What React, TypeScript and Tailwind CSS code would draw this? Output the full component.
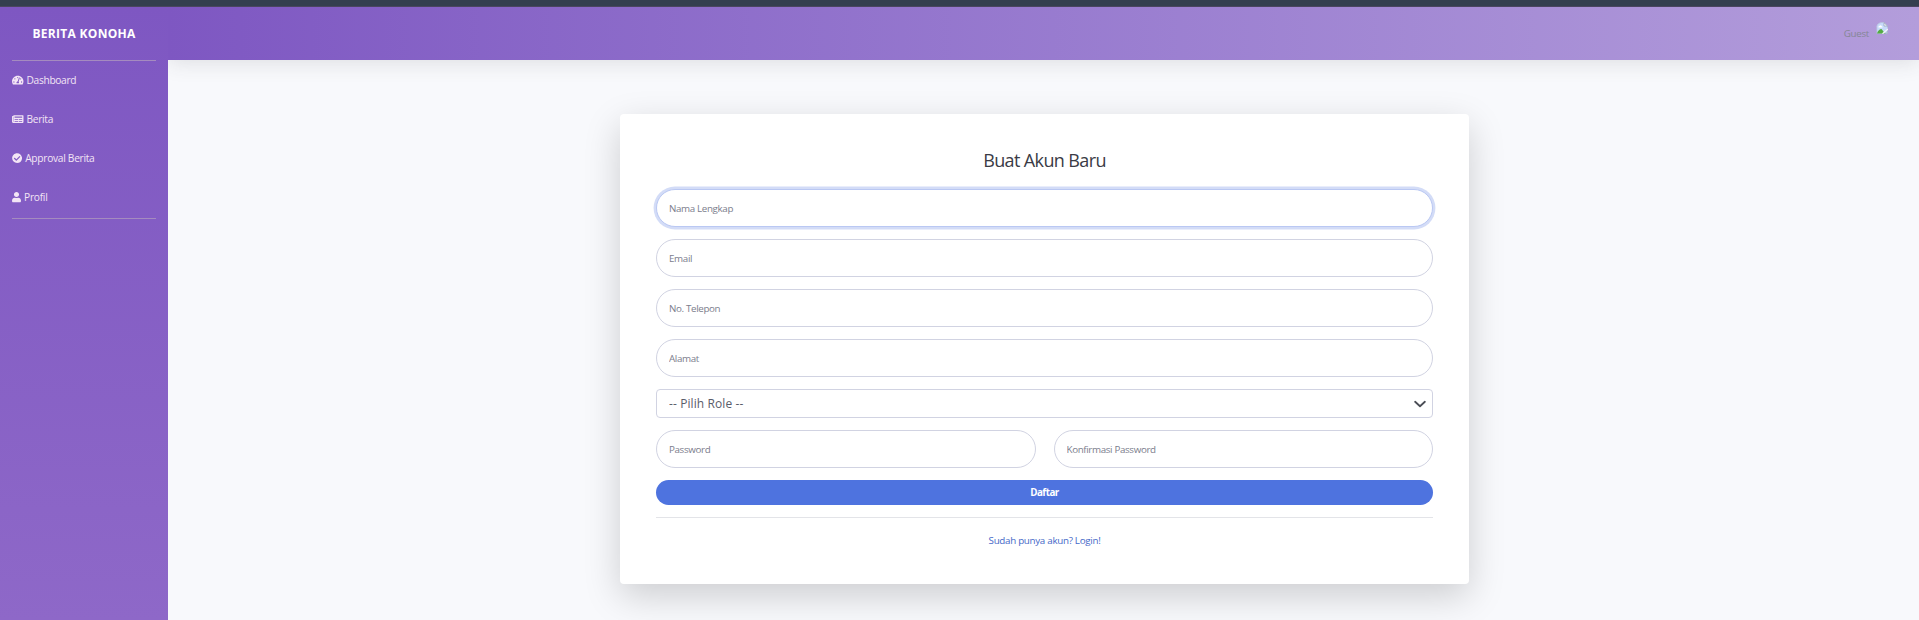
import { FaTachometerAlt, FaNewspaper, FaCheckCircle, FaUser } from "react-icons/fa";

const menu = [
  { label: "Dashboard", Icon: FaTachometerAlt, icon: "w-[11.5px]", text: "tracking-[-0.32px]" },
  { label: "Berita", Icon: FaNewspaper, icon: "w-[11.5px]", text: "tracking-[-0.3px]" },
  { label: "Approval Berita", Icon: FaCheckCircle, icon: "w-[10.2px]", text: "tracking-[-0.28px]" },
  { label: "Profil", Icon: FaUser, icon: "w-[9px]", text: "tracking-[-0.25px]" },
];

function Sidebar() {
  return (
    <aside className="flex w-[168px] shrink-0 flex-col bg-linear-to-b from-[#7e57c2] to-[#8e68c8] px-3">
      <div className="flex h-[53px] items-center justify-center text-[12px] font-bold tracking-[0.3px] text-white">
        <span className="whitespace-nowrap">BERITA KONOHA</span>
      </div>
      <hr className="border-[#a58bbf]" />
      <nav className="flex flex-col pb-[1px]">
        {menu.map(({ label, Icon, icon, text }) => (
          <a key={label} href="#" className="flex h-[39px] items-center gap-[3px] text-[10.2px] text-[#f3e5f5]">
            <Icon className={`h-[10.2px] shrink-0 ${icon}`} />
            <span className={text}>{label}</span>
          </a>
        ))}
      </nav>
      <hr className="border-[#a58bbf]" />
    </aside>
  );
}

function BrokenImage() {
  return (
    <svg className="mb-[11px] h-3 w-3" viewBox="0 0 12 12">
      <path d="M.8 4Q2 .7 5.5 .5H8L11.5 4V11.5H1Z" fill="#c7dafa" stroke="#b9c3da" strokeWidth=".7" />
      <path d="M8 .8V4H11.5Z" fill="#f6f8fd" stroke="#8995a9" strokeWidth=".6" />
      <path d="M2.5 5Q2.5 3.7 3.8 3.7Q5 2.5 5.7 4.2Q7 4.5 6.5 5.5H2.5Z" fill="#fff" />
      <path d="M1 11.5Q2.5 7 5.5 7L9 11.5Z" fill="#55ab42" />
      <path d="M6.5 11.7L12 7" stroke="#f5f4fb" strokeWidth="1.3" />
      <path d="M9 11.6L11.6 9.3V11.6Z" fill="#d6e1f4" stroke="#8f9bb0" strokeWidth=".5" />
    </svg>
  );
}

function Field({ placeholder, state = "border-[#d1d3e2]" }: { placeholder: string; state?: string }) {
  return (
    <input
      placeholder={placeholder}
      className={`block h-[38px] w-full min-w-0 rounded-full border bg-white px-[12px] pt-[1px] text-[9.8px] tracking-[-0.36px] outline-none placeholder:text-[#7b7d8c] ${state}`}
    />
  );
}

function RegisterCard() {
  return (
    <section className="h-[470px] w-[849px] rounded-[4px] bg-white px-9 pt-[35px] shadow-[0_12px_36px_rgba(0,0,0,0.175)]">
      <h1 className="mb-[18px] text-center text-[18px] leading-[22px] tracking-[-0.62px] text-[#3a3b45]">Buat Akun Baru</h1>
      <form className="flex flex-col gap-3">
        <Field placeholder="Nama Lengkap" state="border-[#bac8f3] shadow-[0_0_0_2.4px_rgba(78,115,223,0.25)]" />
        <Field placeholder="Email" />
        <Field placeholder="No. Telepon" />
        <Field placeholder="Alamat" />
        <div className="grid h-[29px] items-center">
          <select className="col-start-1 row-start-1 h-full w-full appearance-none rounded-[4px] border border-[#d1d3e2] bg-white px-[12px] text-[12px] tracking-[0.1px] text-[#5a5c69] outline-none">
            <option>-- Pilih Role --</option>
          </select>
          <svg className="pointer-events-none col-start-1 row-start-1 mr-[7px] h-3 w-3 justify-self-end" viewBox="0 0 16 16" fill="none" stroke="#4a4d55" strokeWidth="2.4" strokeLinecap="round" strokeLinejoin="round">
            <path d="m1.5 5 6.5 6 6.5-6" />
          </svg>
        </div>
        <div className="grid grid-cols-2 gap-[18px]">
          <Field placeholder="Password" />
          <Field placeholder="Konfirmasi Password" />
        </div>
        <button type="button" className="h-[25px] rounded-full bg-[#4e73df] pt-[1px] text-[9.8px] font-bold tracking-[-0.5px] text-white">
          Daftar
        </button>
        <hr className="border-[#e3e4e8]" />
      </form>
      <div className="mt-[15px] text-center text-[9.8px] leading-[16px] tracking-[-0.3px] text-[#4568c8]">
        <a href="#">Sudah punya akun? Login!</a>
      </div>
    </section>
  );
}

export default function App() {
  return (
    <div className="flex h-[620px] w-full flex-col overflow-hidden bg-[#f8f9fc] font-['Open_Sans','Noto_Sans',sans-serif]">
      <div className="h-[7px] shrink-0 border-b border-[#4a4660] bg-[#343f4f]" />
      <div className="flex min-h-0 flex-1">
        <Sidebar />
        <div className="flex min-w-0 flex-1 flex-col overflow-hidden">
          <header className="flex h-[53px] shrink-0 items-center justify-end bg-linear-to-r from-[#7e57c2] to-[#b39ddb] pr-[31px] shadow-[0_2px_21px_rgba(58,59,69,0.15)]">
            <span className="mt-[1px] mr-[7px] text-[9.8px] tracking-[-0.3px] text-[#858796]">Guest</span>
            <BrokenImage />
          </header>
          <main className="flex justify-center pt-[54px] pl-[2px]">
            <RegisterCard />
          </main>
        </div>
      </div>
    </div>
  );
}
